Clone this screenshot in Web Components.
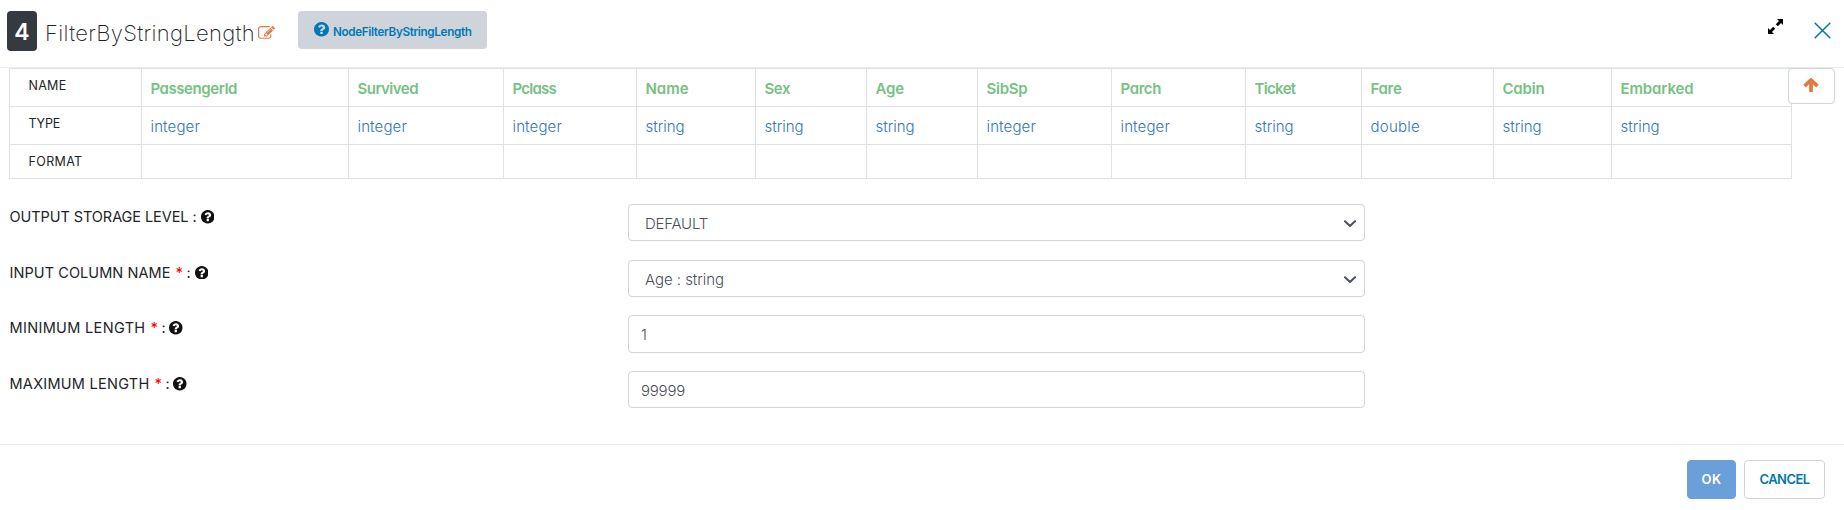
<!DOCTYPE html>
<html lang="en">
<head>
<meta charset="utf-8">
<title>FilterByStringLength</title>
<style>
body{margin:0;background:#fff;font-family:Inter,"Open Sans",sans-serif;font-feature-settings:"cv11";color:#212529}
</style>
</head>
<body>
<node-dialog></node-dialog>
<script>
const define=(name,html,setup)=>customElements.define(name,class extends HTMLElement{
  connectedCallback(){
    if(this.shadowRoot)return;
    const t=document.createElement('template');
    t.innerHTML=typeof html==='function'?html(this):html;
    this.attachShadow({mode:'open'}).append(t.content.cloneNode(true));
    if(setup)setup(this);
  }
});

/* text run tracked so that its advance equals the "w" attribute */
define('ui-text','<style>:host{display:inline-block;white-space:pre}</style><slot></slot>',el=>{
  const w=+el.getAttribute('w');
  if(!w)return;
  const n=el.textContent.length;
  const nat=el.getBoundingClientRect().width;
  el.style.letterSpacing=((w-nat)/n).toFixed(3)+'px';
});

const icons={
  help:['0 0 1536 1536','<path d="M896 1248v-192q0-14-9-23t-23-9H672q-14 0-23 9t-9 23v192q0 14 9 23t23 9h192q14 0 23-9t9-23zm256-672q0-88-55.500-163T958 297t-170-41q-243 0-371 213-15 24 8 42l132 100q7 6 19 6 16 0 25-12 53-68 86-92 34-24 86-24 48 0 85.500 26t37.500 59q0 38-20 61t-68 45q-63 28-115.500 86.500T640 892v36q0 14 9 23t23 9h192q14 0 23-9t9-23q0-19 21.500-49.500T972 829q32-18 49-28.500t46-35 44.500-48 28-60.500 12.500-81zm384 192q0 209-103 385.500T1153.500 1433 768 1536t-385.500-103T103 1153.500 0 768t103-385.500T382.500 103 768 0t385.500 103T1433 382.500 1536 768z"/>'],
  edit:['0 0 1792 1536','<path d="M888 1056l116-116-152-152-116 116v56h96v96h56zm440-720q-16-16-33 1L945 687q-17 17-1 33t33-1l350-350q17-17 1-33zm80 594v190q0 119-84.500 203.500T1120 1408H288q-119 0-203.500-84.500T0 1120V288Q0 169 84.500 84.500T288 0h832q63 0 117 25 15 7 18 23 3 17-9 29l-49 49q-14 14-32 8-23-6-45-6H288q-66 0-113 47t-47 113v832q0 66 47 113t113 47h832q66 0 113-47t47-113V994q0-13 9-22l64-64q15-15 35-7t20 29zm-96-738l288 288-672 672H640V864zm444 132l-92 92-288-288 92-92q28-28 68-28t68 28l152 152q28 28 28 68t-28 68z"/>'],
  expand:['0 0 15 15','<path d="M9 0h6v6l-2-2-3.200 3.200-2-2L11 2zM0 9v6h6l-2-2 3.200-3.200-2-2L2 11z"/>'],
  close:['0 0 17 17','<path d="M.7.7l15.600 15.600M16.300.7L.7 16.300" fill="none" stroke="currentColor" stroke-width="1.500"/>'],
  up:['0 0 16 14','<path d="M8 14V3M1.500 8.200L8 2l6.500 6.200" fill="none" stroke="currentColor" stroke-width="3.700"/>'],
  chevron:['0 0 12 8','<path d="M1 1.300l5 4.700 5-4.700" fill="none" stroke="#495057" stroke-width="2" stroke-linecap="round" stroke-linejoin="round"/>']
};
define('ui-icon',el=>{
  const [box,body]=icons[el.getAttribute('name')];
  return `<style>:host{display:block;flex:none}svg{display:block;width:100%;height:100%}</style>
  <svg viewBox="${box}" fill="currentColor" preserveAspectRatio="none">${body}</svg>`;
});

define('dialog-header',`<style>
:host{display:flex;align-items:flex-start;height:67px;border-bottom:1px solid #e9ecef;box-sizing:content-box;padding-left:7px}
.badge{width:30px;height:40px;margin-top:11px;border-radius:4px;background:#343a40;color:#fff;font:600 23px/42px Inter,sans-serif;text-align:center}
.title{margin:17px 0 0 8px;font-size:22px;font-weight:250;line-height:32px}
.edit{width:17px;height:14px;margin:26px 0 0 3px;color:#e87a40}
.node{display:flex;box-sizing:border-box;width:189px;height:38px;margin:11px 0 0 23px;padding:11px 0 0 16px;border-radius:4px;background:#ced4da;color:#0078b5;font-size:11.700px;font-weight:600;line-height:18px}
.node ui-icon{width:15px;height:14.500px;margin-right:4px}
.expand{width:15px;height:15px;margin:19px 31px 0 auto;color:#000}
.close{width:17px;height:17px;margin:22px 13px 0 0;color:#0078b0}
</style>
<div class="badge">4</div>
<ui-text class="title" w="210">FilterByStringLength</ui-text>
<ui-icon class="edit" name="edit"></ui-icon>
<div class="node"><ui-icon name="help"></ui-icon><ui-text w="138.5" style="margin:1px 0 0 0">NodeFilterByStringLength</ui-text></div>
<ui-icon class="expand" name="expand"></ui-icon>
<ui-icon class="close" name="close"></ui-icon>`);

const columns=[['PassengerId','integer',207,86.5],['Survived','integer',155,60.5],['Pclass','integer',133,43.5],['Name','string',119,43],['Sex','string',111,25.5],['Age','string',111,28.5],['SibSp','integer',134,41],['Parch','integer',134,40.5],['Ticket','string',116,41],['Fare','double',132,31],['Cabin','string',118,42],['Embarked','string',180,73]];
const typeWidth={integer:49.5,string:39,double:49.5};
define('schema-table',`<style>
:host{display:grid;grid-template-columns:132px ${columns.map(c=>c[2]+'px').join(' ')};grid-template-rows:38px 38px 34px;width:max-content;border:solid #dee2e6;border-width:1px 0 0 1px}
div{box-sizing:border-box;border:solid #dee2e6;border-width:0 1px 1px 0;padding:8px 0 0 8.500px;font-size:15px;line-height:24px}
.head{padding:8px 0 0 18.500px;font-size:12.500px;line-height:18px}
.name{color:#75c282;font-weight:600}
.type{color:#2f76c0;font-weight:300}
</style>
<div class="head"><ui-text w="38">NAME</ui-text></div>${columns.map(c=>`<div class="name"><ui-text w="${c[3]}">${c[0]}</ui-text></div>`).join('')}
<div class="head"><ui-text w="31.5">TYPE</ui-text></div>${columns.map(c=>`<div class="type"><ui-text w="${typeWidth[c[1]]}">${c[1]}</ui-text></div>`).join('')}
<div class="head"><ui-text w="54">FORMAT</ui-text></div>${'<div></div>'.repeat(12)}`);

define('scroll-up-button',`<style>
:host{display:flex;box-sizing:border-box;width:47px;height:36px;border:1px solid #ced4da;border-radius:4px;background:#fff;padding:9px 0 0 14px;color:#e07b42}
ui-icon{width:16px;height:14px}
</style><ui-icon name="up"></ui-icon>`);

define('form-row',el=>`<style>
:host{display:grid;grid-template-columns:618.500px 737px;align-items:start;height:55.700px;padding-left:9.500px}
.label{display:flex;font-size:14.500px;line-height:20px;padding-top:3px;color:#212529}
.req{color:#f00;width:12px;padding-left:5px;box-sizing:border-box;font-weight:500}
.colon{width:12px;padding-left:4px;box-sizing:border-box;font-weight:400}
ui-icon{width:13.500px;height:13.500px;margin-top:3px;color:#111}
.field{display:flex;justify-content:space-between;box-sizing:border-box;height:37.400px;border:1px solid #ced4da;border-radius:4px;padding:7px 8px 0 ${el.hasAttribute('select')?16:12}px;font-size:15px;font-weight:300;line-height:24px;color:#495057}
.field ui-icon{width:12px;height:8px;margin-top:8px}
</style>
<div class="label"><ui-text w="${el.getAttribute('lw')}">${el.getAttribute('label')}</ui-text>${el.hasAttribute('required')?'<span class="req">*</span>':''}<span class="colon">:</span><ui-icon name="help"></ui-icon></div>
<div class="field"><ui-text w="${el.getAttribute('vw')}">${el.getAttribute('value')}</ui-text>${el.hasAttribute('select')?'<ui-icon name="chevron"></ui-icon>':''}</div>`);

define('ui-button',`<style>
:host{display:block;box-sizing:border-box;height:39px;border:1px solid #ced4da;border-radius:4px;color:#0078b0;font-size:13px;font-weight:600;line-height:37px;text-align:center}
:host([primary]){background:#6a9fd9;border-color:#6a9fd9;color:#fff}
</style><slot></slot>`);

define('node-dialog',`<style>
:host{display:flex;flex-direction:column;height:510px;overflow:hidden}
.schema{display:flex;height:136px;padding-left:9px}
scroll-up-button{margin-left:-4px;position:relative}
.form{height:240px}
footer{display:flex;gap:8px;justify-content:flex-end;height:66px;border-top:1px solid #e5e7e9;padding:15px 19px 0 0;box-sizing:border-box}
</style>
<dialog-header></dialog-header>
<div class="schema"><div><schema-table></schema-table></div><scroll-up-button></scroll-up-button></div>
<div class="form">
<form-row select label="OUTPUT STORAGE LEVEL" lw="179" value="DEFAULT" vw="63"></form-row>
<form-row select required label="INPUT COLUMN NAME" lw="161" value="Age : string" vw="79"></form-row>
<form-row required label="MINIMUM LENGTH" lw="136" value="1" vw="6"></form-row>
<form-row required label="MAXIMUM LENGTH" lw="140" value="99999" vw="44"></form-row>
</div>
<footer><ui-button primary style="width:49px"><ui-text w="20">OK</ui-text></ui-button><ui-button style="width:81px"><ui-text w="50">CANCEL</ui-text></ui-button></footer>`);
</script>
</body>
</html>
